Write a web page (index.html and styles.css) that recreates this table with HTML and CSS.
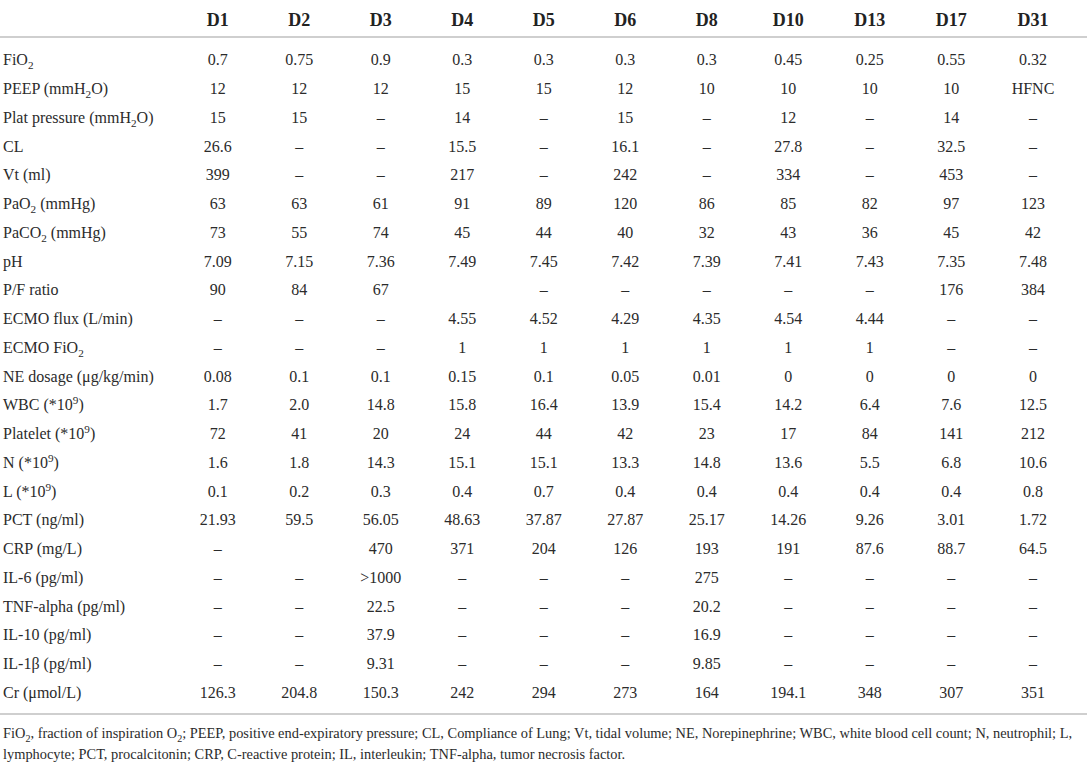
FILE: index.html
```html
<!DOCTYPE html>
<html lang="en">
<head>
    <meta charset="UTF-8">
    <meta name="viewport" content="width=device-width, initial-scale=1.0">
    <title>Clinical course</title>
    <link rel="stylesheet" href="styles.css">
</head>
<body>
    <div class="tabela">
        <table>
            <colgroup>
                <col class="col-nome">
                <col span="10" class="col-dia">
                <col class="col-fim">
            </colgroup>
            <thead>
                <tr>
                    <th></th>
                    <th>D1</th><th>D2</th><th>D3</th><th>D4</th><th>D5</th><th>D6</th>
                    <th>D8</th><th>D10</th><th>D13</th><th>D17</th><th>D31</th>
                </tr>
            </thead>
            <tbody>
                <tr><td>FiO<sub>2</sub></td><td>0.7</td><td>0.75</td><td>0.9</td><td>0.3</td><td>0.3</td><td>0.3</td><td>0.3</td><td>0.45</td><td>0.25</td><td>0.55</td><td>0.32</td></tr>
                <tr><td>PEEP (mmH<sub>2</sub>O)</td><td>12</td><td>12</td><td>12</td><td>15</td><td>15</td><td>12</td><td>10</td><td>10</td><td>10</td><td>10</td><td>HFNC</td></tr>
                <tr><td>Plat pressure (mmH<sub>2</sub>O)</td><td>15</td><td>15</td><td>–</td><td>14</td><td>–</td><td>15</td><td>–</td><td>12</td><td>–</td><td>14</td><td>–</td></tr>
                <tr><td>CL</td><td>26.6</td><td>–</td><td>–</td><td>15.5</td><td>–</td><td>16.1</td><td>–</td><td>27.8</td><td>–</td><td>32.5</td><td>–</td></tr>
                <tr><td>Vt (ml)</td><td>399</td><td>–</td><td>–</td><td>217</td><td>–</td><td>242</td><td>–</td><td>334</td><td>–</td><td>453</td><td>–</td></tr>
                <tr><td>PaO<sub>2</sub> (mmHg)</td><td>63</td><td>63</td><td>61</td><td>91</td><td>89</td><td>120</td><td>86</td><td>85</td><td>82</td><td>97</td><td>123</td></tr>
                <tr><td>PaCO<sub>2</sub> (mmHg)</td><td>73</td><td>55</td><td>74</td><td>45</td><td>44</td><td>40</td><td>32</td><td>43</td><td>36</td><td>45</td><td>42</td></tr>
                <tr><td>pH</td><td>7.09</td><td>7.15</td><td>7.36</td><td>7.49</td><td>7.45</td><td>7.42</td><td>7.39</td><td>7.41</td><td>7.43</td><td>7.35</td><td>7.48</td></tr>
                <tr><td>P/F ratio</td><td>90</td><td>84</td><td>67</td><td></td><td>–</td><td>–</td><td>–</td><td>–</td><td>–</td><td>176</td><td>384</td></tr>
                <tr><td>ECMO flux (L/min)</td><td>–</td><td>–</td><td>–</td><td>4.55</td><td>4.52</td><td>4.29</td><td>4.35</td><td>4.54</td><td>4.44</td><td>–</td><td>–</td></tr>
                <tr><td>ECMO FiO<sub>2</sub></td><td>–</td><td>–</td><td>–</td><td>1</td><td>1</td><td>1</td><td>1</td><td>1</td><td>1</td><td>–</td><td>–</td></tr>
                <tr><td>NE dosage (μg/kg/min)</td><td>0.08</td><td>0.1</td><td>0.1</td><td>0.15</td><td>0.1</td><td>0.05</td><td>0.01</td><td>0</td><td>0</td><td>0</td><td>0</td></tr>
                <tr><td>WBC (*10<sup>9</sup>)</td><td>1.7</td><td>2.0</td><td>14.8</td><td>15.8</td><td>16.4</td><td>13.9</td><td>15.4</td><td>14.2</td><td>6.4</td><td>7.6</td><td>12.5</td></tr>
                <tr><td>Platelet (*10<sup>9</sup>)</td><td>72</td><td>41</td><td>20</td><td>24</td><td>44</td><td>42</td><td>23</td><td>17</td><td>84</td><td>141</td><td>212</td></tr>
                <tr><td>N (*10<sup>9</sup>)</td><td>1.6</td><td>1.8</td><td>14.3</td><td>15.1</td><td>15.1</td><td>13.3</td><td>14.8</td><td>13.6</td><td>5.5</td><td>6.8</td><td>10.6</td></tr>
                <tr><td>L (*10<sup>9</sup>)</td><td>0.1</td><td>0.2</td><td>0.3</td><td>0.4</td><td>0.7</td><td>0.4</td><td>0.4</td><td>0.4</td><td>0.4</td><td>0.4</td><td>0.8</td></tr>
                <tr><td>PCT (ng/ml)</td><td>21.93</td><td>59.5</td><td>56.05</td><td>48.63</td><td>37.87</td><td>27.87</td><td>25.17</td><td>14.26</td><td>9.26</td><td>3.01</td><td>1.72</td></tr>
                <tr><td>CRP (mg/L)</td><td>–</td><td></td><td>470</td><td>371</td><td>204</td><td>126</td><td>193</td><td>191</td><td>87.6</td><td>88.7</td><td>64.5</td></tr>
                <tr><td>IL-6 (pg/ml)</td><td>–</td><td>–</td><td>&gt;1000</td><td>–</td><td>–</td><td>–</td><td>275</td><td>–</td><td>–</td><td>–</td><td>–</td></tr>
                <tr><td>TNF-alpha (pg/ml)</td><td>–</td><td>–</td><td>22.5</td><td>–</td><td>–</td><td>–</td><td>20.2</td><td>–</td><td>–</td><td>–</td><td>–</td></tr>
                <tr><td>IL-10 (pg/ml)</td><td>–</td><td>–</td><td>37.9</td><td>–</td><td>–</td><td>–</td><td>16.9</td><td>–</td><td>–</td><td>–</td><td>–</td></tr>
                <tr><td>IL-1β (pg/ml)</td><td>–</td><td>–</td><td>9.31</td><td>–</td><td>–</td><td>–</td><td>9.85</td><td>–</td><td>–</td><td>–</td><td>–</td></tr>
                <tr><td>Cr (μmol/L)</td><td>126.3</td><td>204.8</td><td>150.3</td><td>242</td><td>294</td><td>273</td><td>164</td><td>194.1</td><td>348</td><td>307</td><td>351</td></tr>
            </tbody>
        </table>
        <p class="nota">FiO<sub>2</sub>, fraction of inspiration O<sub>2</sub>; PEEP, positive end-expiratory pressure; CL, Compliance of Lung; Vt, tidal volume; NE, Norepinephrine; WBC, white blood cell count; N, neutrophil; L, lymphocyte; PCT, procalcitonin; CRP, C-reactive protein; IL, interleukin; TNF-alpha, tumor necrosis factor.</p>
    </div>
</body>
</html>
```

FILE: styles.css
```css
body {
    margin: 0;
    font-family: 'Liberation Serif', 'Times New Roman', serif;
    color: #2b2b2b;
    background: #fff;
}
.tabela {
    width: 1087px;
}
table {
    width: 1087px;
    table-layout: fixed;
    border-collapse: collapse;
    border-bottom: 2px solid #cfcfcf;
}
.col-nome {
    width: 177px;
}
.col-dia {
    width: 81.5px;
}
.col-fim {
    width: 95px;
}
th, td {
    padding: 0;
    text-align: center;
    white-space: nowrap;
}
th {
    height: 30px;
    font-size: 18px;
    line-height: 20px;
    font-weight: bold;
    color: #222;
    border-bottom: 2px solid #cfcfcf;
    vertical-align: bottom;
    padding-bottom: 6px;
}
th:last-child, td:last-child {
    padding-right: 13px;
}
td {
    height: 28.75px;
    font-size: 16px;
    line-height: 20px;
    vertical-align: middle;
}
td:first-child {
    text-align: left;
    padding-left: 3px;
}
tbody tr:first-child td {
    padding-top: 8px;
}
tbody tr:last-child td {
    padding-bottom: 6px;
}
sub, sup {
    font-size: 70%;
    line-height: 0;
}
.nota {
    margin: 0;
    padding: 8px 3px 0;
    font-size: 14.4px;
    line-height: 21px;
    color: #2b2b2b;
}
```
